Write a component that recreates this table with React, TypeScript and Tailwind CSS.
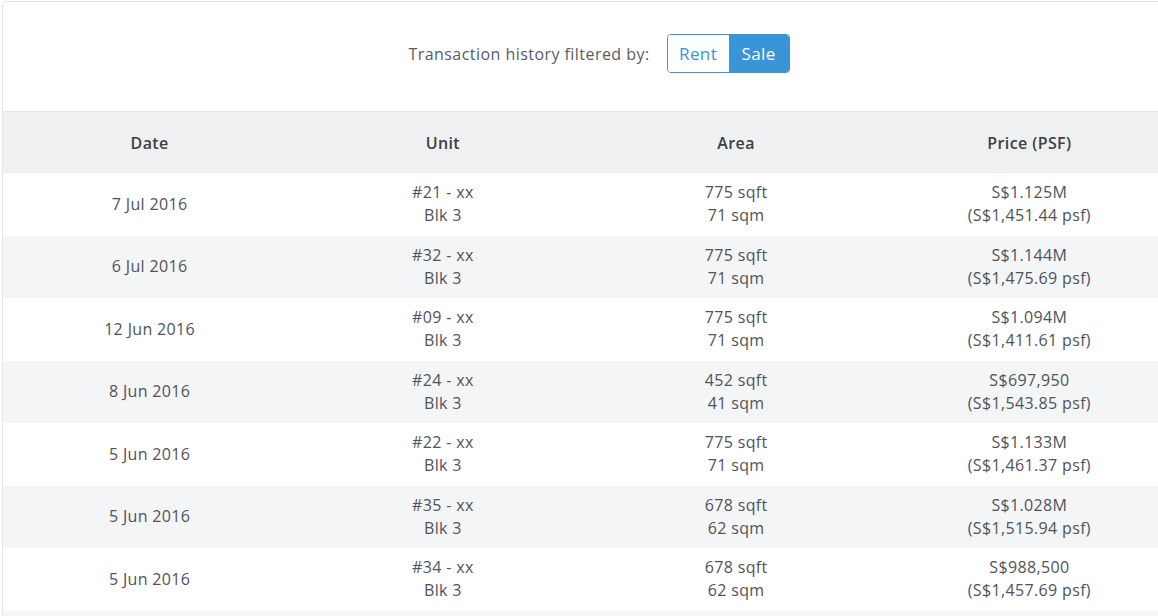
import React from "react";

const rows = [
  ["7 Jul 2016", "#21 - xx", "775 sqft", "71 sqm", "S$1.125M", "(S$1,451.44 psf)"],
  ["6 Jul 2016", "#32 - xx", "775 sqft", "71 sqm", "S$1.144M", "(S$1,475.69 psf)"],
  ["12 Jun 2016", "#09 - xx", "775 sqft", "71 sqm", "S$1.094M", "(S$1,411.61 psf)"],
  ["8 Jun 2016", "#24 - xx", "452 sqft", "41 sqm", "S$697,950", "(S$1,543.85 psf)"],
  ["5 Jun 2016", "#22 - xx", "775 sqft", "71 sqm", "S$1.133M", "(S$1,461.37 psf)"],
  ["5 Jun 2016", "#35 - xx", "678 sqft", "62 sqm", "S$1.028M", "(S$1,515.94 psf)"],
  ["5 Jun 2016", "#34 - xx", "678 sqft", "62 sqm", "S$988,500", "(S$1,457.69 psf)"],
];

export default function App() {
  return (
    <div
      className="w-[1158px] h-[616px] overflow-hidden bg-white"
      style={{ fontFamily: "'Open Sans', sans-serif" }}
    >
      <div className="ml-[2px] mt-[1px] w-[1175px] rounded-[4px] border border-[#e6e6e6] bg-white">
        <div className="h-[109px] flex items-center justify-center gap-[17px] pb-[6px] pl-[19px]">
          <span className="text-[16px] tracking-[0.45px] text-[#585c62]">Transaction history filtered by:</span>
          <div className="flex h-[39px] rounded-[4px] border border-[#3a94d8] overflow-hidden">
            <button className="w-[61px] text-[17px] tracking-[0.4px] text-[#3a94d8] bg-white">Rent</button>
            <button className="w-[60px] text-[17px] tracking-[0.4px] text-white bg-[#3a94d8]">Sale</button>
          </div>
        </div>
        <div className="grid grid-cols-4 h-[62px] items-center bg-[#eff0f2] border-t border-[#e3e4e6] text-[16px] tracking-[0.4px] font-semibold text-[#3d4045] text-center">
          <div>Date</div>
          <div>Unit</div>
          <div>Area</div>
          <div>Price (PSF)</div>
        </div>
        {rows.map((r, i) => (
          <div
            key={i}
            className={`grid grid-cols-4 h-[62.5px] items-center text-center text-[16px] tracking-[0.35px] leading-[23px] text-[#505358] ${
              i % 2 === 1 ? "bg-[#f4f5f7]" : "bg-white"
            }`}
          >
            <div>{r[0]}</div>
            <div className="flex flex-col">
              <span>{r[1]}</span>
              <span>Blk 3</span>
            </div>
            <div className="flex flex-col">
              <span>{r[2]}</span>
              <span>{r[3]}</span>
            </div>
            <div className="flex flex-col">
              <span>{r[4]}</span>
              <span>{r[5]}</span>
            </div>
          </div>
        ))}
        <div className="h-[62.5px] bg-[#f4f5f7]" />
      </div>
    </div>
  );
}
